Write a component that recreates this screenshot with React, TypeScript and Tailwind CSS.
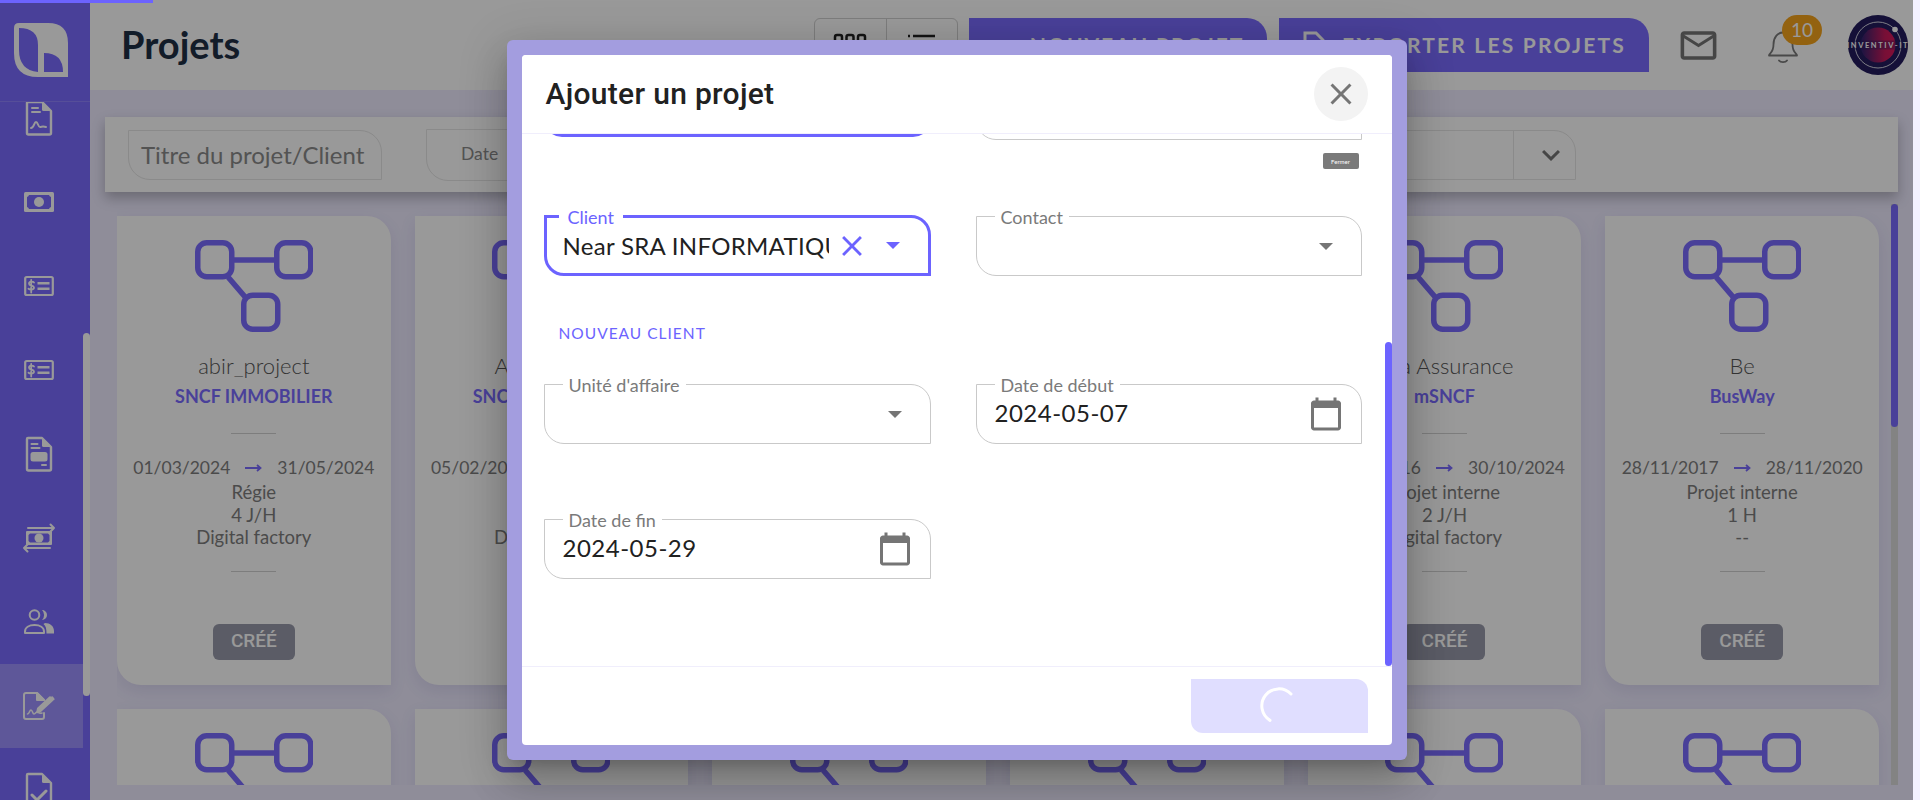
import React from "react";

const font = { fontFamily: "Lato, 'Noto Sans', sans-serif" };

function SideIcon({ kind }: { kind: number }) {
  const s = { fill: "none", stroke: "#fff", strokeWidth: 2.4, strokeLinejoin: "round" as const, strokeLinecap: "round" as const };
  const doc = "M7 2H21L30 11V33a1.500 1.500 0 0 1-1.500 1.500H7.500A1.500 1.500 0 0 1 6 33V3a1 1 0 0 1 1-1Z";
  const fold = "M21 2L30 11H22.500a1.500 1.500 0 0 1-1.500-1.500Z";
  return (
    <svg width="36" height="36" viewBox="0 0 36 36">
      {kind === 0 && (
        <g>
          <path d={doc} {...s} />
          <path d={fold} fill="#fff" />
          <path d="M11 8h6M11 12h8" {...s} strokeWidth="2" />
          <path d="M10 28c3 0 3-6 5-6s2 5 4 5 2-1 6 0" {...s} strokeWidth="2" />
        </g>
      )}
      {kind === 1 && (
        <g>
          <rect x="3" y="8" width="30" height="20" rx="1.500" fill="#fff" />
          <path d="M8 11h20a3 3 0 0 0 2 2v10a3 3 0 0 0-2 2H8a3 3 0 0 0-2-2V13a3 3 0 0 0 2-2Z" fill="#7b6cff" />
          <circle cx="18" cy="18" r="5" fill="#fff" />
        </g>
      )}
      {kind === 2 && (
        <g {...s}>
          <rect x="4.200" y="9" width="27.600" height="18" rx="1.500" strokeWidth="2.200" />
          <path d="M13 14.500c-1-1.200-5-1.300-5 1.200s5 1.300 5 3.800-4 2.500-5.500 1.200M10.200 12v12.500" strokeWidth="1.800" />
          <path d="M16.500 15.300h12M16.500 20.700h12" strokeWidth="2.500" strokeLinecap="butt" />
        </g>
      )}
      {kind === 3 && (
        <g>
          <path d={doc} {...s} />
          <path d={fold} fill="#fff" />
          <path d="M10.500 8h6M10.500 12h8M21 29h4" {...s} strokeWidth="2" />
          <rect x="9.500" y="16" width="17" height="9.500" rx="2.500" fill="#fff" />
        </g>
      )}
      {kind === 4 && (
        <g>
          <rect x="5" y="11" width="26" height="14" rx="1" fill="#fff" />
          <path d="M9 13.500h18l1.500 1.500v6l-1.500 1.500H9L7.500 21v-6Z" fill="#7b6cff" />
          <circle cx="18" cy="18" r="4.500" fill="#fff" />
          <path d="M7 8h26M29.500 4.500l3.500 3.500-3.500 3.500M29 28H3M6.500 24.500L3 28l3.500 3.500" {...s} strokeWidth="2" />
        </g>
      )}
      {kind === 5 && (
        <g>
          <circle cx="13.500" cy="11" r="4.800" {...s} strokeWidth="2" />
          <path d="M21 6a5 5 0 0 1 0 10 7 7 0 0 0 0-10Z" fill="#fff" />
          <path d="M4 29v-1.500c0-4 4-6.500 9.500-6.500s9.500 2.500 9.500 6.500V29Z" {...s} strokeWidth="2" />
          <path d="M24 19c5 0 9 3 9 8v2.500h-7.500c0-4.500-.5-7.500-3-9.500Z" fill="#fff" />
        </g>
      )}
      {kind === 6 && (
        <g {...s} strokeWidth="2">
          <path d="M23 25v4a2 2 0 0 1-2 2H5a2 2 0 0 1-2-2V7a2 2 0 0 1 2-2h11l7 7" />
          <path d="M16 5l7 7h-7Z" fill="#fff" />
          <path d="M6.500 26c2 0 2-4 3.500-4s1.500 4 3 4 2-2 3-2 2 2 5 1" strokeWidth="1.600" />
          <path d="M19 23.500l12.500-11.500-2.500-2.800-12 11.300-.8 3.800Z" fill="#fff" />
          <path d="M31 9.200l1.600 2" />
        </g>
      )}
      {kind === 7 && (
        <g>
          <path d={doc} {...s} />
          <path d={fold} fill="#fff" />
          <path d="M11 23l5 5 9-9" {...s} strokeWidth="3" />
        </g>
      )}
    </svg>
  );
}

function GraphIcon() {
  return (
    <svg width="118" height="92" viewBox="0 0 118 92" fill="none" stroke="#7b6cff" strokeWidth="5.500">
      <rect x="2.750" y="2.750" width="34" height="34" rx="9" />
      <rect x="81.750" y="2.750" width="34" height="34" rx="9" />
      <rect x="48.750" y="55.250" width="34" height="34" rx="9" />
      <path d="M37 20h45M33 37l18 21" />
    </svg>
  );
}

type Card = { title: string; client: string; start: string; end: string; type: string; load: string; unit: string };

const row: Card[] = [
  { title: "abir_project", client: "SNCF IMMOBILIER", start: "01/03/2024", end: "31/05/2024", type: "Régie", load: "4 J/H", unit: "Digital factory" },
  { title: "Autre projet", client: "SNCF IMMOBILIER", start: "05/02/2024", end: "31/05/2024", type: "Régie", load: "4 J/H", unit: "Digital factory" },
  { title: "Projet", client: "SNCF", start: "01/01/2024", end: "31/05/2024", type: "Régie", load: "4 J/H", unit: "Digital factory" },
  { title: "Projet", client: "SNCF", start: "01/01/2024", end: "31/05/2024", type: "Régie", load: "4 J/H", unit: "Digital factory" },
  { title: "Axa Assurance", client: "mSNCF", start: "01/01/2016", end: "30/10/2024", type: "Projet interne", load: "2 J/H", unit: "Digital factory" },
  { title: "Be", client: "BusWay", start: "28/11/2017", end: "28/11/2020", type: "Projet interne", load: "1 H", unit: "--" },
];

function ProjectCard({ c }: { c: Card }) {
  return (
    <div className="h-[469px] bg-white rounded-tr-[24px] rounded-bl-[24px] flex flex-col items-center pt-6 shadow-[0_6px_16px_rgba(90,80,160,0.12)]">
      <GraphIcon />
      <div className="mt-[20px] h-7 leading-7 text-[22px] font-light text-[#555]">{c.title}</div>
      <div className="mt-[5px] h-[22px] leading-[22px] text-[18px] font-bold text-[#7b6cff]">{c.client}</div>
      <div className="mt-[26px] w-[45px] h-px bg-[#d0d0d0]" />
      <div className="mt-[21px] h-[25px] leading-[25px] flex items-center gap-[15px] text-[17.500px] text-[#7e7e7e] whitespace-nowrap">
        <span>{c.start}</span>
        <svg width="17" height="10" viewBox="0 0 17 10" fill="none" stroke="#7b6cff" strokeWidth="1.800"><path d="M0 5h15M12 2l3.500 3L12 8" /></svg>
        <span>{c.end}</span>
      </div>
      <div className="mt-px h-[22.500px] leading-[22.500px] text-[18.500px] text-[#7e7e7e]">{c.type}</div>
      <div className="h-[22.500px] leading-[22.500px] text-[18.500px] text-[#7e7e7e]">{c.load}</div>
      <div className="h-[22.500px] leading-[22.500px] text-[18.500px] text-[#7e7e7e]">{c.unit}</div>
      <div className="mt-[22px] w-[45px] h-px bg-[#d0d0d0]" />
      <div className="mt-[52px] w-[82px] h-9 rounded-md bg-[#989aaa] text-white flex items-center justify-center text-[19px] font-medium" style={{ fontFamily: "Roboto, sans-serif" }}>CRÉÉ</div>
    </div>
  );
}

function Caret({ color }: { color: string }) {
  return (
    <svg width="14" height="7" viewBox="0 0 14 7"><path d="M0 0h14L7 7Z" fill={color} /></svg>
  );
}

function Calendar() {
  return (
    <svg width="36" height="36" viewBox="0 0 24 24" fill="#757575">
      <path d="M20 3h-1V1h-2v2H7V1H5v2H4c-1.100 0-2 .9-2 2v16c0 1.100.9 2 2 2h16c1.100 0 2-.9 2-2V5c0-1.100-.9-2-2-2zm0 18H4V8h16v13z" />
    </svg>
  );
}

function Close({ color, size }: { color: string; size: number }) {
  return (
    <svg width={size} height={size} viewBox="0 0 24 24" fill={color}>
      <path d="M19 6.410 17.590 5 12 10.590 6.410 5 5 6.410 10.590 12 5 17.590 6.410 19 12 13.410 17.590 19 19 17.590 13.410 12z" />
    </svg>
  );
}

function Field({ label, value, icon }: { label: string; value?: string; icon: "caret" | "cal" }) {
  return (
    <div className="relative h-[60px] border border-[#c9c9c9] rounded-tr-[20px] rounded-bl-[20px] flex items-center pl-[18px] pr-[17px]">
      <span className="absolute -top-[10px] left-[18px] bg-white px-[6px] h-5 leading-5 text-[18px] text-[#7a7a7a]">{label}</span>
      <span className="flex-1 text-[24px] tracking-[0.5px] text-[#212121] -mt-[2px]">{value}</span>
      {icon === "caret" ? <span className="mr-[11px] flex"><Caret color="#757575" /></span> : <Calendar />}
    </div>
  );
}

function Avatar() {
  return (
    <svg width="60" height="60" viewBox="0 0 60 60" className="ml-[49px] mr-[5px] shrink-0">
      <defs>
        <linearGradient id="avatarFill" x1="0" x2="1" y1="0" y2="0">
          <stop offset="0" stopColor="#2a2270" />
          <stop offset="0.7" stopColor="#c81a5a" />
          <stop offset="1" stopColor="#d8175a" />
        </linearGradient>
      </defs>
      <circle cx="30" cy="30" r="30" fill="#231c5e" />
      <circle cx="30" cy="30" r="23" fill="none" stroke="#fff" strokeWidth="0.800" />
      <circle cx="30" cy="30" r="17.500" fill="url(#avatarFill)" />
      <circle cx="47" cy="14.500" r="2.800" fill="#fff" />
      <rect x="0" y="25.500" width="60" height="9" fill="#231c5e" fillOpacity="0.35" />
      <text x="30" y="33" textAnchor="middle" fontSize="7.500" fontWeight="700" letterSpacing="1.600" fill="#fff" fontFamily="Lato, sans-serif">INVENTIV-IT</text>
    </svg>
  );
}

export default function App() {
  return (
    <div className="w-[1920px] h-[800px] overflow-hidden bg-[#f3f1ff] relative" style={font}>
      <div className="w-[1913px] h-[800px] flex relative">
        {/* sidebar */}
        <aside className="w-[90px] h-full bg-[#7b6cff] flex flex-col shrink-0">
          <div className="h-[102px] border-b border-[#8f82ff] pt-[23px] pl-[14px] shrink-0">
            <svg width="54" height="54" viewBox="0 0 54 54">
              <path fillRule="evenodd" fill="#fff" d="M0 5Q0 0 5 0H34Q54 0 54 20V54H24Q0 54 0 30ZM5 5V27Q5 47 24 49V22Q24 5 5 5ZM30 30V49H49Q49 30 30 30Z" />
            </svg>
          </div>
          <div className="flex-1 flex overflow-hidden">
            <div className="w-[83px] -mt-[26px] shrink-0">
              {[0, 1, 2, 2, 3, 4, 5, 6, 7].map((k, i) => (
                <div key={i} className={`h-[84px] flex items-center justify-center pr-[5px] ${i === 7 ? "bg-[#9d92ff]" : ""}`}>
                  <SideIcon kind={k} />
                </div>
              ))}
            </div>
            <div className="w-[7px] pt-[231px]">
              <div className="h-[363px] rounded-full bg-white" />
            </div>
          </div>
        </aside>

        {/* main */}
        <main className="flex-1 min-w-0 h-full bg-[#eeebff] flex flex-col">
          <header className="h-[90px] shrink-0 bg-white flex items-center pl-[31px]">
            <h1 className="text-[38px] font-bold text-[#1f2f45] leading-none -mt-[2px]">Projets</h1>
            <div className="flex-1" />
            <div className="h-[54px] w-[144px] flex border border-[#d0d0d0] rounded-md self-start mt-[18px]">
              <div className="flex-1 border-r border-[#d0d0d0] flex items-center justify-center">
                <svg width="34" height="24" viewBox="0 0 34 24" fill="none" stroke="#222" strokeWidth="2.500">
                  <rect x="2" y="2" width="7" height="8" rx="2" /><rect x="13.500" y="2" width="7" height="8" rx="2" /><rect x="25" y="2" width="7" height="8" rx="2" />
                </svg>
              </div>
              <div className="flex-1 flex items-center justify-center">
                <svg width="30" height="24" viewBox="0 0 30 24" fill="none" stroke="#222" strokeWidth="2.500">
                  <path d="M6 3h22M6 10h22M1 3h2M1 10h2" />
                </svg>
              </div>
            </div>
            <button className="ml-[11px] h-[54px] w-[298px] self-start mt-[18px] pl-[8px] rounded-tr-[20px] rounded-bl-[20px] bg-[#7b6cff] text-white text-[21px] font-bold tracking-[2px] flex items-center justify-center gap-4">
              <span>+</span><span>NOUVEAU PROJET</span>
            </button>
            <button className="ml-[12px] h-[54px] w-[370px] self-start mt-[18px] rounded-tr-[20px] rounded-bl-[20px] bg-[#7b6cff] text-white text-[21px] font-bold tracking-[2.200px] flex items-center justify-center gap-4">
              <svg width="24" height="28" viewBox="0 0 24 28" fill="none" stroke="#fff" strokeWidth="3"><path d="M3 2h11l7 7v17H3Z" /></svg>
              <span>EXPORTER LES PROJETS</span>
            </button>
            <div className="ml-[28px] flex">
              <svg width="43" height="43" viewBox="0 0 24 24" fill="#757575">
                <path d="M20 4H4c-1.100 0-1.990.9-1.990 2L2 18c0 1.100.9 2 2 2h16c1.100 0 2-.9 2-2V6c0-1.100-.9-2-2-2zm0 14H4V8l8 5 8-5v10zm-8-7L4 6h16l-8 5z" />
              </svg>
            </div>
            <div className="relative ml-[47px] mt-[4px] flex">
              <svg width="32" height="34" viewBox="0 0 32 34" fill="none" stroke="#7a7a7a" strokeWidth="1.800" strokeLinejoin="round" strokeLinecap="round">
                <path d="M2 25.500C2 23.500 6.500 23 6.500 14.500 6.500 7 11 2.500 16 2.500S25.500 7 25.500 14.500C25.500 23 30 23.500 30 25.500Z" />
                <path d="M12 30.500c1.500 2.200 6.500 2.200 8 0" />
              </svg>
              <span className="absolute -top-[15px] left-[15px] w-10 h-[30px] rounded-full bg-[#f5a31c] text-white text-[19px] flex items-center justify-center">10</span>
            </div>
            <Avatar />
          </header>

          <div className="mt-[27px] mx-[15px] h-[75px] shrink-0 bg-white relative z-10 shadow-[0_6px_12px_rgba(0,0,0,0.25)] flex items-center pl-[23px] gap-[44px]">
            <div className="w-[254px] h-[50px] border border-[#e6e6e6] rounded-tr-[22px] rounded-bl-[22px] flex items-center pl-[12px] text-[24px] text-[#8a8a8a] shrink-0 whitespace-nowrap">Titre du projet/Client</div>
            <div className="w-[440px] h-[52px] border border-[#e6e6e6] rounded-tr-[22px] rounded-bl-[22px] flex items-center pl-[34px] text-[17.500px] text-[#8a8a8a] shrink-0">Date</div>
            <div className="ml-[216px] w-[450px] h-[50px] border border-[#e6e6e6] rounded-tr-[22px] rounded-bl-[22px] flex justify-end shrink-0">
              <div className="w-[62px] border-l border-[#e6e6e6] flex items-center justify-center pl-[12px]">
                <svg width="36" height="36" viewBox="0 0 24 24" fill="#757575"><path d="M16.590 8.590 12 13.170 7.410 8.590 6 10l6 6 6-6z" /></svg>
              </div>
            </div>
          </div>

          <div className="flex-1 min-h-0 flex pl-[27px] pr-[15px] mb-[15px]">
            <div className="flex-1 min-w-0 overflow-hidden pt-6 pr-3">
              <div className="grid grid-cols-6 gap-6">
                {row.map((c, i) => <ProjectCard key={i} c={c} />)}
                {row.map((c, i) => <ProjectCard key={"b" + i} c={c} />)}
              </div>
            </div>
            <div className="w-[7px] mt-3 bg-[#dadada] shrink-0">
              <div className="h-[223px] bg-[#7b6cff] rounded-full" />
            </div>
          </div>
        </main>

        {/* overlay + modal */}
        <div className="absolute inset-0 z-20 bg-black/40 flex items-center justify-center">
          <div className="w-[900px] h-[720px] rounded-md bg-[#a39ddf] p-[15px] shadow-[0_11px_15px_-7px_rgba(0,0,0,0.2),0_24px_38px_3px_rgba(0,0,0,0.14),0_9px_46px_8px_rgba(0,0,0,0.12)]">
            <div className="w-[870px] h-[690px] bg-white rounded relative flex flex-col overflow-hidden">
              <div className="h-[79px] shrink-0 border-b border-[#f0eefc] flex items-center justify-between pl-6 pr-6 relative z-10 bg-white">
                <h2 className="text-[30px] tracking-[0.3px] font-medium text-[#212121] -mt-[2px]" style={{ fontFamily: "Roboto, sans-serif" }}>Ajouter un projet</h2>
                <button className="w-[54px] h-[54px] rounded-full bg-[#f3f3f3] flex items-center justify-center">
                  <Close color="#757575" size={36} />
                </button>
              </div>
              <span className="absolute left-[801px] top-[98px] w-9 h-4 bg-[#7a7a7a] rounded-[2px] text-white text-[6px] flex items-center justify-center">Fermer</span>

              <div className="flex-1 min-h-0 flex relative">
                <div className="flex-1 min-w-0 overflow-hidden pl-[22px]">
                  <div className="w-[818px] grid grid-cols-[387px_386px] gap-x-[45px] -mt-[54px]">
                    <div className="h-[57px] border-[3px] border-[#6c63ff] rounded-[18px]" />
                    <div className="h-[60px] border border-[#c9c9c9] rounded-bl-[20px]" />
                  </div>
                  <div className="w-[818px] grid grid-cols-[387px_386px] gap-x-[45px] mt-[76px]">
                    <div className="relative h-[61px] -mt-px border-[3px] border-[#6c63ff] rounded-tr-[20px] rounded-bl-[20px] flex items-center pl-4 pr-[14px]">
                      <span className="absolute -top-[11px] left-[12px] bg-white px-[9px] h-5 leading-5 text-[18px] text-[#6c63ff]">Client</span>
                      <span className="w-[266px] overflow-hidden whitespace-nowrap text-[24px] tracking-[0.3px] text-[#212121]">Near SRA INFORMATIQUE</span>
                      <span className="ml-[6px] flex"><Close color="#6c63ff" size={34} /></span>
                      <span className="ml-[17px] flex"><Caret color="#6c63ff" /></span>
                    </div>
                    <Field label="Contact" icon="caret" />
                  </div>
                  <div className="mt-[47px] pl-[15px] h-5 leading-5 text-[15.500px] tracking-[1px] text-[#6c63ff]">NOUVEAU CLIENT</div>
                  <div className="w-[818px] grid grid-cols-[387px_386px] gap-x-[45px] mt-[41px]">
                    <Field label="Unité d'affaire" icon="caret" />
                    <Field label="Date de début" value="2024-05-07" icon="cal" />
                  </div>
                  <div className="w-[818px] grid grid-cols-[387px_386px] gap-x-[45px] mt-[75px]">
                    <Field label="Date de fin" value="2024-05-29" icon="cal" />
                  </div>
                </div>
                <div className="w-[7px] shrink-0 pt-[208px]">
                  <div className="h-full rounded-full bg-[#6c63ff]" />
                </div>
              </div>

              <div className="h-[79px] shrink-0 border-t border-[#f0eefc] flex justify-end items-start pt-3 pr-6">
                <div className="w-[177px] h-[54px] bg-[#e0deff] rounded-tr-[12px] rounded-bl-[12px] flex items-center justify-center">
                  <svg width="40" height="40" viewBox="0 0 40 40" fill="none" stroke="#fff" strokeWidth="3" strokeLinecap="round">
                    <path d="M32 8A17 17 0 1 0 11 34.400" />
                  </svg>
                </div>
              </div>
            </div>
          </div>
        </div>

        {/* page loading bar */}
        <div className="absolute left-0 top-0 z-30 w-[153px] h-[3px] bg-[#6c63ff]" />
      </div>
    </div>
  );
}
